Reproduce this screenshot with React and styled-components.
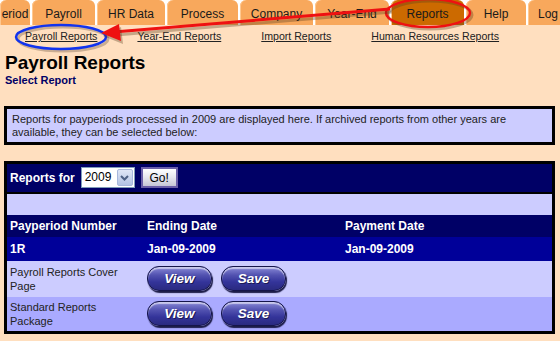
import styled, { createGlobalStyle } from "styled-components";

const GlobalStyle = createGlobalStyle`
  html, body {
    margin: 0;
    padding: 0;
    background: #ffdfbf;
    font-family: "Liberation Sans", Arial, sans-serif;
  }
`;

const Page = styled.div`
  position: relative;
  width: 560px;
  height: 341px;
  overflow: hidden;
  background: #ffdfbf;
`;

const TabBar = styled.div`
  display: flex;
  height: 25px;
  background: #ffffff;
  margin-left: -2px;
`;

const Tab = styled.div`
  flex: 0 0 ${(p) => p.$w}px;
  margin-left: 2px;
  display: flex;
  align-items: center;
  justify-content: center;
  border-radius: 6px 6px 0 0;
  background: ${(p) => (p.$active ? "#cc6a00" : "#f8a85c")};
  box-shadow: inset 1px 0 0 #ffc890;
  font-size: 12px;
  color: #1a1a1a;
  padding-top: 2px;
  box-sizing: border-box;
`;

const SubNav = styled.div`
  display: flex;
  gap: 40px;
  padding: 5px 0 0 25px;
  height: 21px;
  box-sizing: border-box;
`;

const SubLink = styled.a`
  font-size: 10.6px;
  color: #222222;
  text-decoration: underline;
  cursor: pointer;
`;

const Title = styled.h1`
  margin: 6px 0 0 5px;
  font-size: 19px;
  font-weight: bold;
  color: #000000;
  line-height: 22px;
`;

const SubTitle = styled.div`
  margin-left: 5px;
  font-size: 11px;
  font-weight: bold;
  color: #000066;
  line-height: 13px;
`;

const InfoBox = styled.div`
  margin: 19px 5px 0 4px;
  border: 3px solid #000000;
  background: #ccccff;
  padding: 4px 5px 3px;
  font-size: 11px;
  line-height: 13px;
  color: #222222;
  box-sizing: border-box;
  height: 39px;
`;

const Table = styled.table`
  margin: 16px 0 0 4px;
  width: 551px;
  border-collapse: collapse;
  border: 3px solid #000000;
  font-size: 11px;
`;

const Row = styled.tr`
  background: ${(p) => p.$bg};
  height: ${(p) => p.$h}px;
  ${(p) => (p.$rule ? "border-top: 2px solid #000000;" : "")}
`;

const Cell = styled.td`
  padding: 0 0 0 ${(p) => p.$pad ?? 3}px;
  vertical-align: middle;
  color: ${(p) => (p.$light ? "#ffffff" : "#222222")};
  font-weight: ${(p) => (p.$bold ? "bold" : "normal")};
  font-size: ${(p) => (p.$bold ? 12 : 11)}px;
  line-height: 14px;
  width: ${(p) => (p.$w ? `${p.$w}px` : "auto")};
`;

const ToolRow = styled.div`
  display: flex;
  align-items: center;
  gap: 5px;
  font-size: 12px;
  font-weight: bold;
  color: #ffffff;
`;

const Select = styled.div`
  display: flex;
  height: 19px;
  border: 1px solid #7f9db9;
  background: #ffffff;
  margin-left: 1px;
`;

const SelectValue = styled.span`
  width: 31px;
  padding-left: 3px;
  font-size: 12px;
  font-weight: normal;
  color: #000000;
  line-height: 19px;
`;

const SelectArrow = styled.span`
  width: 16px;
  margin: 1px;
  background: linear-gradient(#dfe6f6, #b4c4e4);
  border: 1px solid #a8b8dc;
  border-radius: 2px;
  display: flex;
  align-items: center;
  justify-content: center;
  box-sizing: border-box;
`;

const GoButton = styled.button`
  margin-left: 1px;
  width: 37px;
  height: 21px;
  border: 2px solid #6a5ea8;
  background: linear-gradient(#ffffff, #e6e6ee 50%, #c6c6d6);
  font-family: inherit;
  font-size: 12px;
  color: #000000;
  padding: 0;
`;

const Actions = styled.div`
  display: flex;
  gap: 9px;
`;

const GlossButton = styled.button`
  width: 65px;
  height: 25px;
  border-radius: 12px;
  border: 1px solid #15154a;
  background: linear-gradient(#8a8ad8 0%, #5252b0 35%, #34349a 65%, #2a2a80 100%);
  box-shadow: inset 0 2px 1px rgba(255, 255, 255, 0.55), 1px 2px 1px #1d1d4a;
  color: #ffffff;
  font-family: inherit;
  font-style: italic;
  font-weight: bold;
  font-size: 13.5px;
  text-shadow: 1px 1px 0 #1a1a55;
  padding: 0;
`;

const Overlay = styled.svg`
  position: absolute;
  top: 0;
  left: 0;
  pointer-events: none;
`;

const tabs = [
  ["eriod", 30],
  ["Payroll", 63],
  ["HR Data", 68],
  ["Process", 71],
  ["Company", 73],
  ["Year-End", 74],
  ["Reports", 73],
  ["Help", 60],
  ["Log", 40],
];

const links = ["Payroll Reports", "Year-End Reports", "Import Reports", "Human Resources Reports"];

const reports = [
  ["Payroll Reports Cover", "Page", "#ccccff"],
  ["Standard Reports", "Package", "#aaaaff"],
];

export default function App() {
  return (
    <Page>
      <GlobalStyle />
      <TabBar>
        {tabs.map(([label, w]) => (
          <Tab key={label} $w={w} $active={label === "Reports"}>
            {label}
          </Tab>
        ))}
      </TabBar>
      <SubNav>
        {links.map((l) => (
          <SubLink key={l}>{l}</SubLink>
        ))}
      </SubNav>
      <Title>Payroll Reports</Title>
      <SubTitle>Select Report</SubTitle>
      <InfoBox>
        Reports for payperiods processed in 2009 are displayed here. If archived reports from other years are
        <br />
        available, they can be selected below:
      </InfoBox>
      <Table>
        <tbody>
          <Row $bg="#000066" $h={30}>
            <Cell colSpan={3} $pad={3}>
              <ToolRow>
                Reports for
                <Select>
                  <SelectValue>2009</SelectValue>
                  <SelectArrow>
                    <svg width="9" height="6" viewBox="0 0 9 6">
                      <path d="M1 1 L4.5 4.5 L8 1" fill="none" stroke="#4d6185" strokeWidth="2" />
                    </svg>
                  </SelectArrow>
                </Select>
                <GoButton>Go!</GoButton>
              </ToolRow>
            </Cell>
          </Row>
          <Row $bg="#ccccff" $h={22} $rule>
            <Cell colSpan={3} />
          </Row>
          <Row $bg="#000066" $h={22}>
            <Cell $light $bold $w={137}>Payperiod Number</Cell>
            <Cell $light $bold $pad={0} $w={198}>Ending Date</Cell>
            <Cell $light $bold $pad={0}>Payment Date</Cell>
          </Row>
          <Row $bg="#000099" $h={24}>
            <Cell $light $bold>1R</Cell>
            <Cell $light $bold $pad={0}>Jan-09-2009</Cell>
            <Cell $light $bold $pad={0}>Jan-09-2009</Cell>
          </Row>
          {reports.map(([a, b, bg]) => (
            <Row key={a} $bg={bg} $h={36}>
              <Cell>
                {a}
                <br />
                {b}
              </Cell>
              <Cell $pad={0}>
                <Actions>
                  <GlossButton>View</GlossButton>
                  <GlossButton>Save</GlossButton>
                </Actions>
              </Cell>
              <Cell />
            </Row>
          ))}
        </tbody>
      </Table>
      <Overlay width="560" height="341" viewBox="0 0 560 341">
        <ellipse cx="430" cy="15" rx="42" ry="14" fill="none" stroke="rgba(90,60,30,0.35)" strokeWidth="3" />
        <ellipse cx="428" cy="13" rx="42" ry="14" fill="none" stroke="#ee1111" strokeWidth="2.5" />
        <ellipse cx="63" cy="39" rx="45" ry="12" fill="none" stroke="rgba(80,60,40,0.3)" strokeWidth="3" />
        <ellipse cx="61" cy="37" rx="45" ry="12" fill="none" stroke="#1133ee" strokeWidth="2.5" />
        <line x1="392" y1="12" x2="116" y2="35" stroke="rgba(90,60,30,0.35)" strokeWidth="3" />
        <line x1="390" y1="9" x2="114" y2="32" stroke="#ee1111" strokeWidth="3" />
        <polygon points="101,33 119,24 121,41" fill="rgba(90,60,30,0.35)" transform="translate(2,3)" />
        <polygon points="101,33 119,24 121,41" fill="#ee1111" />
      </Overlay>
    </Page>
  );
}
